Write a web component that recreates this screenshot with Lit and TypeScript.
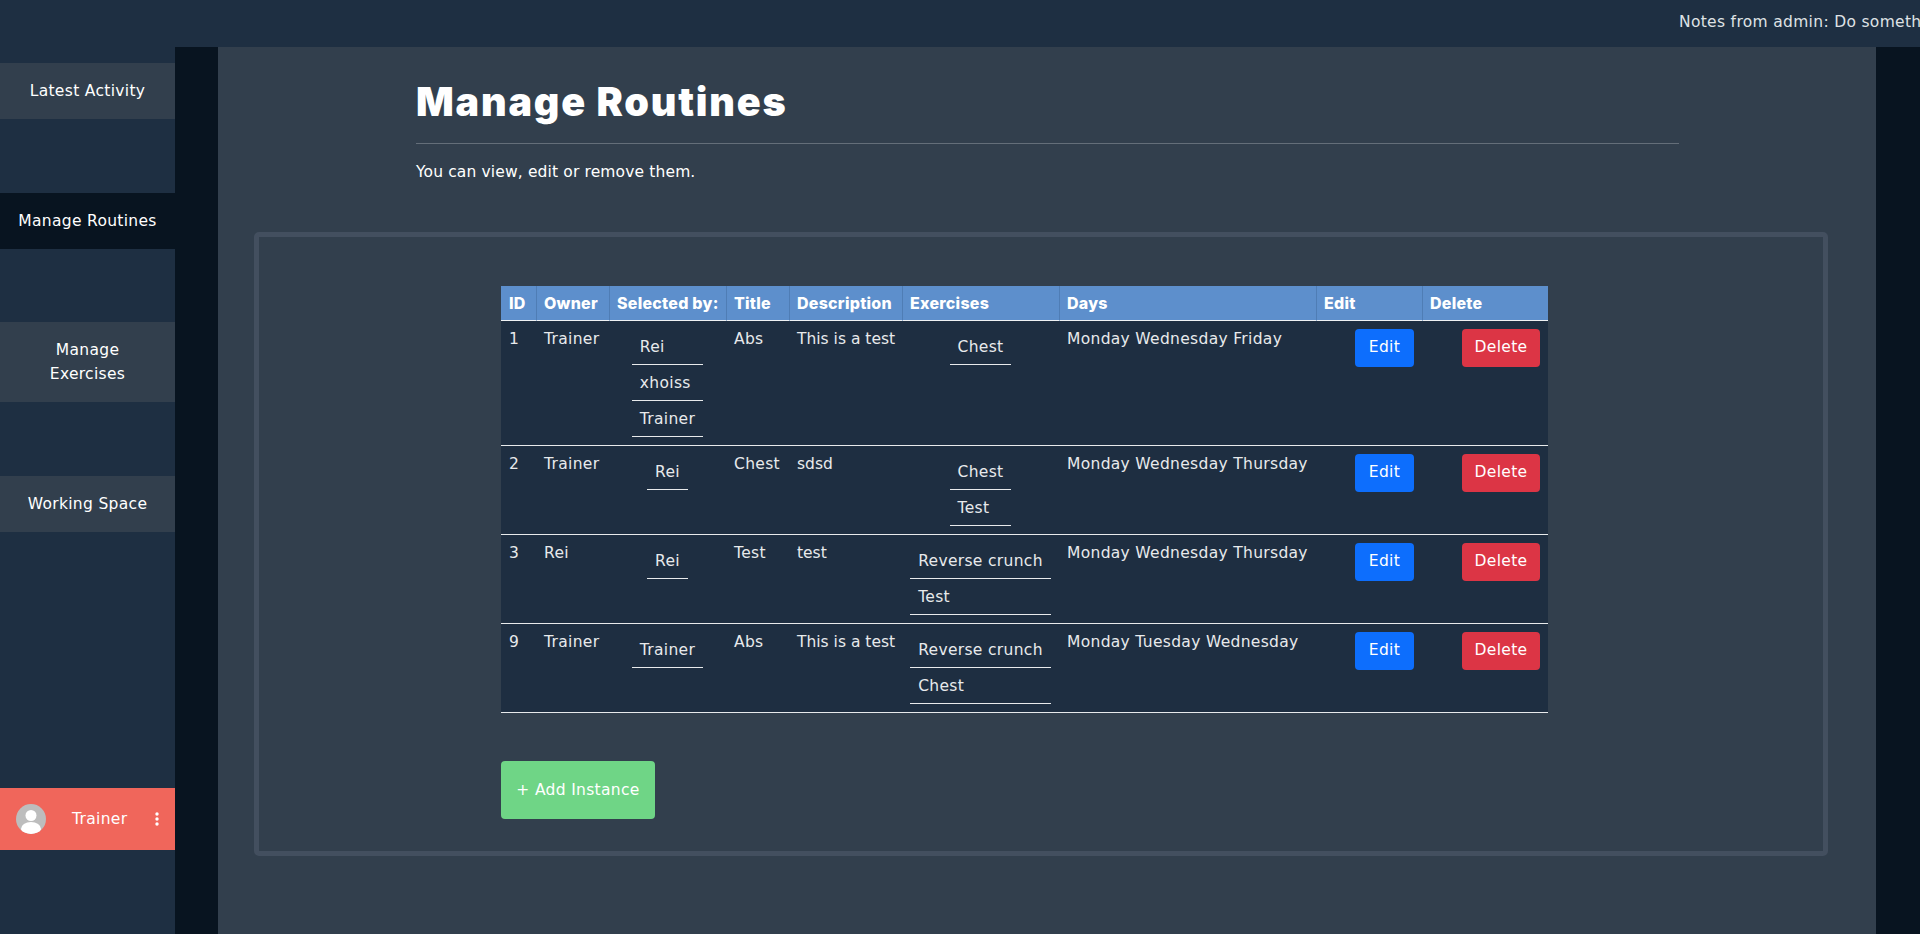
import { LitElement, html, css } from 'lit';
import { customElement } from 'lit/decorators.js';
import { classMap } from 'lit/directives/class-map.js';

interface Routine {
  id: number;
  owner: string;
  selectedBy: string[];
  title: string;
  description: string;
  exercises: string[];
  days: string;
}

const ROUTINES: Routine[] = [
  { id: 1, owner: 'Trainer', selectedBy: ['Rei', 'xhoiss', 'Trainer'], title: 'Abs', description: 'This is a test', exercises: ['Chest'], days: 'Monday Wednesday Friday' },
  { id: 2, owner: 'Trainer', selectedBy: ['Rei'], title: 'Chest', description: 'sdsd', exercises: ['Chest', 'Test'], days: 'Monday Wednesday Thursday' },
  { id: 3, owner: 'Rei', selectedBy: ['Rei'], title: 'Test', description: 'test', exercises: ['Reverse crunch', 'Test'], days: 'Monday Wednesday Thursday' },
  { id: 9, owner: 'Trainer', selectedBy: ['Trainer'], title: 'Abs', description: 'This is a test', exercises: ['Reverse crunch', 'Chest'], days: 'Monday Tuesday Wednesday' },
];

const HEADERS = ['ID', 'Owner', 'Selected by:', 'Title', 'Description', 'Exercises', 'Days', 'Edit', 'Delete'];
const COL_WIDTHS = [35, 73, 117, 63, 113, 157, 257, 106, 126];

const NAV = [
  { label: 'Latest Activity', active: false, wrap: false },
  { label: 'Manage Routines', active: true, wrap: false },
  { label: 'Manage Exercises', active: false, wrap: true },
  { label: 'Working Space', active: false, wrap: false },
];

@customElement('app-root')
export class AppRoot extends LitElement {
  static styles = css`
    :host {
      display: block;
      height: 934px;
      overflow: hidden;
      background: #081420;
      color: #fff;
      font-family: 'DejaVu Sans', sans-serif;
      font-size: 15.5px;
      letter-spacing: 0.32px;
    }

    .topbar {
      height: 47px;
      background: #1e2f42;
      padding-left: 1679px;
      line-height: 44px;
      white-space: nowrap;
      overflow: hidden;
      color: #dfe2e5;
    }

    .body {
      display: flex;
      height: 887px;
    }

    .sidebar {
      width: 175px;
      flex: none;
      background: #1e2f42;
      padding-top: 16px;
      box-sizing: border-box;
    }

    .nav-item {
      display: block;
      padding: 16px 8px;
      margin-bottom: 74px;
      background: #323f4d;
      text-align: center;
      line-height: 24px;
    }

    .nav-item.active {
      background: #081420;
    }

    .nav-item.wrap {
      padding: 16px 30px;
      margin-top: -1px;
    }

    .profile {
      display: flex;
      align-items: center;
      height: 62px;
      margin-top: 256px;
      padding-left: 16px;
      background: #f0665b;
    }

    .avatar {
      width: 30px;
      height: 30px;
      flex: none;
    }

    .profile-name {
      margin-left: 26px;
      width: 59px;
    }

    .kebab {
      width: 6px;
      height: 16px;
      margin-left: 23px;
      flex: none;
    }

    .main {
      flex: 1;
      margin: 0 44px 0 43px;
      background: #323f4d;
    }

    .head {
      margin: 0 197px 0 198px;
      padding-top: 31px;
    }

    h1 {
      margin: 0 0 17px;
      font-family: Inter, sans-serif;
      font-size: 39.5px;
      font-weight: 900;
      line-height: 48px;
      letter-spacing: 1.8px;
    }

    .rule {
      height: 1px;
      background: #646e79;
    }

    .lead {
      margin: 16px 0 48px;
      line-height: 24px;
      letter-spacing: 0.14px;
    }

    .box {
      margin-left: 36px;
      width: 1574px;
      box-sizing: border-box;
      border: 5px solid #434f5f;
      border-radius: 5px;
      padding: 49px 0 32px 242px;
    }

    table {
      width: 1047px;
      table-layout: fixed;
      border-collapse: separate;
      border-spacing: 0;
      background: #1e2e41;
    }

    th {
      height: 34px;
      padding: 0 0 1px 7px;
      box-sizing: border-box;
      background: #5d8fcc;
      border-bottom: 1px solid #f0f2f4;
      border-left: 1px solid #4f7db5;
      text-align: left;
      font-family: Inter, sans-serif;
      font-size: 16px;
      font-weight: 800;
      letter-spacing: 0.25px;
      white-space: nowrap;
    }

    th:first-child {
      border-left: none;
      padding-left: 8px;
    }

    thead tr {
      height: 35px;
    }

    td {
      padding: 9px 8px 7px;
      vertical-align: top;
      line-height: 19.5px;
      color: #e8eaec;
      border-bottom: 1px solid #e8eaec;
      white-space: nowrap;
    }

    td.stack {
      padding-top: 8px;
      padding-bottom: 8px;
    }

    td.desc {
      letter-spacing: 0;
    }

    .list {
      display: block;
      width: fit-content;
      margin: 0 auto;
      padding: 0;
      list-style: none;
    }

    .list li {
      height: 36px;
      box-sizing: border-box;
      padding: 0 8px;
      line-height: 36px;
      border-bottom: 1px solid #e8eaec;
    }

    .action {
      padding-top: 8px;
      text-align: right;
    }

    button {
      height: 38px;
      padding: 0;
      border: none;
      border-radius: 4px;
      color: #fff;
      font: inherit;
      letter-spacing: inherit;
      vertical-align: top;
    }

    .edit {
      width: 59px;
      background: #0d6efd;
    }

    .delete {
      width: 78px;
      background: #dc3545;
    }

    .add {
      display: block;
      width: 154px;
      height: 58px;
      margin-top: 48px;
      background: #6fd586;
    }
  `;

  private renderList(items: string[]) {
    return html`<ul class="list">${items.map((i) => html`<li>${i}</li>`)}</ul>`;
  }

  private renderRow(r: Routine) {
    return html`
      <tr>
        <td>${r.id}</td>
        <td>${r.owner}</td>
        <td class="stack">${this.renderList(r.selectedBy)}</td>
        <td>${r.title}</td>
        <td class="desc">${r.description}</td>
        <td class="stack">${this.renderList(r.exercises)}</td>
        <td>${r.days}</td>
        <td class="action"><button class="edit">Edit</button></td>
        <td class="action"><button class="delete">Delete</button></td>
      </tr>
    `;
  }

  render() {
    return html`
      <div class="topbar">Notes from admin: Do something</div>
      <div class="body">
        <nav class="sidebar">
          ${NAV.map(
            (n) => html`<a class="nav-item ${classMap({ active: n.active, wrap: n.wrap })}">${n.label}</a>`,
          )}
          <div class="profile">
            <svg class="avatar" viewBox="0 0 30 30" aria-hidden="true">
              <defs>
                <clipPath id="round"><circle cx="15" cy="15" r="15" /></clipPath>
              </defs>
              <circle cx="15" cy="15" r="15" fill="#bdbdbd" />
              <g clip-path="url(#round)" fill="#fff">
                <circle cx="15" cy="11.5" r="5.5" />
                <ellipse cx="15" cy="25" rx="10" ry="7" />
              </g>
            </svg>
            <span class="profile-name">Trainer</span>
            <svg class="kebab" viewBox="0 0 6 16" aria-hidden="true" fill="#fff">
              <circle cx="3" cy="3" r="1.7" />
              <circle cx="3" cy="8" r="1.7" />
              <circle cx="3" cy="13" r="1.7" />
            </svg>
          </div>
        </nav>
        <main class="main">
          <div class="head">
            <h1>Manage Routines</h1>
            <div class="rule"></div>
            <p class="lead">You can view, edit or remove them.</p>
          </div>
          <section class="box">
            <table>
              <colgroup>${COL_WIDTHS.map((w) => html`<col style="width:${w}px" />`)}</colgroup>
              <thead>
                <tr>${HEADERS.map((h) => html`<th>${h}</th>`)}</tr>
              </thead>
              <tbody>${ROUTINES.map((r) => this.renderRow(r))}</tbody>
            </table>
            <button class="add">+ Add Instance</button>
          </section>
        </main>
      </div>
    `;
  }
}

declare global {
  interface HTMLElementTagNameMap {
    'app-root': AppRoot;
  }
}
